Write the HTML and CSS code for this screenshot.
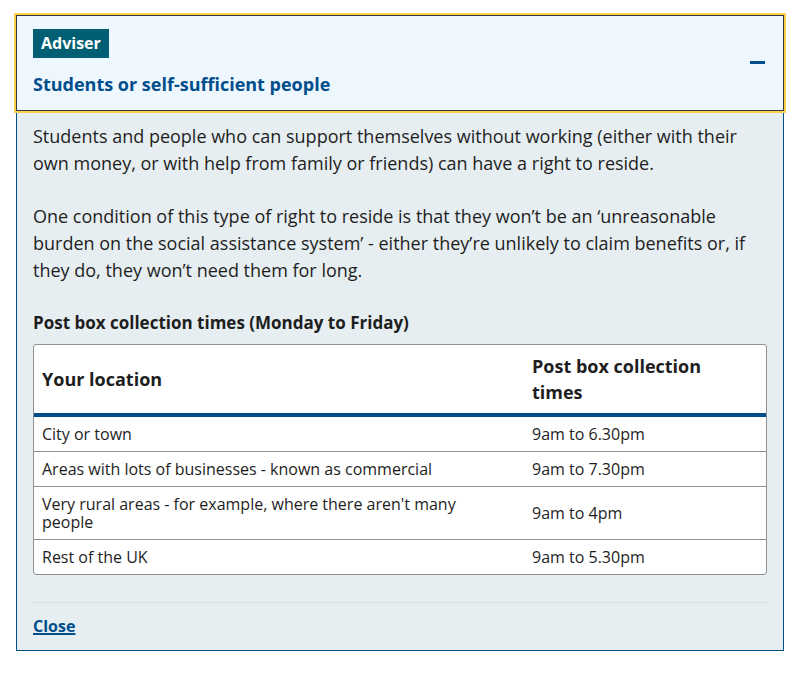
FILE: index.html
```html
<!DOCTYPE html>
<html lang="en">
<head>
<meta charset="utf-8">
<title>Students or self-sufficient people</title>
<link rel="stylesheet" href="styles.css">
</head>
<body>
<div class="panel">
  <div class="panel-header">
    <div class="header-text">
      <span class="badge">Adviser</span>
      <h2 class="title">Students or self-sufficient people</h2>
    </div>
    <span class="minus" aria-hidden="true"></span>
  </div>
  <div class="panel-body">
    <p>Students and people who can support themselves without working (either with their own money, or with help from family or friends) can have a right to reside.</p>
    <p>One condition of this type of right to reside is that they won’t be an ‘unreasonable burden on the social assistance system’ - either they’re unlikely to claim benefits or, if they do, they won’t need them for long.</p>
    <h3 class="caption">Post box collection times (Monday to Friday)</h3>
    <div class="table-wrap">
      <table>
        <thead>
          <tr><th class="col1">Your location</th><th class="col2">Post box collection times</th></tr>
        </thead>
        <tbody>
          <tr><td class="col1">City or town</td><td>9am to 6.30pm</td></tr>
          <tr><td class="col1">Areas with lots of businesses - known as commercial</td><td>9am to 7.30pm</td></tr>
          <tr><td class="col1">Very rural areas - for example, where there aren't many people</td><td>9am to 4pm</td></tr>
          <tr><td class="col1">Rest of the UK</td><td>9am to 5.30pm</td></tr>
        </tbody>
      </table>
    </div>
    <div class="footer">
      <a href="#" class="close">Close</a>
    </div>
  </div>
</div>
</body>
</html>
```

FILE: styles.css
```css
* { box-sizing: border-box; }
html, body { margin: 0; padding: 0; background: #ffffff; }
body {
  padding: 15px 16px;
  font-family: "Open Sans", "Noto Sans", sans-serif;
  color: #1e1e1e;
}
.panel {
  border: 1px solid #00508c;
  background: #e6eef1;
}
.panel-header {
  margin: -1px -1px 0 -1px;
  border: 1px solid #333a40;
  outline: 2px solid #fdcf4a;
  background: #eff7fe;
  padding: 13px 17px 12px 16px;
  display: flex;
  align-items: center;
  justify-content: space-between;
}
.header-text { display: flex; flex-direction: column; align-items: flex-start; }
.badge {
  display: inline-block;
  background: #005f73;
  color: #ffffff;
  font-weight: 700;
  font-size: 16px;
  line-height: 29px;
  padding: 0 8px;
}
.title {
  margin: 13px 0 0 0;
  font-size: 18px;
  line-height: 27px;
  font-weight: 700;
  color: #004e8c;
}
.minus {
  display: block;
  width: 15px;
  height: 3px;
  background: #004e8c;
  margin-right: 1px;
  margin-top: -2px;
}
.panel-body {
  padding: 12px 16px 13px 16px;
}
.panel-body p {
  margin: 0 0 26px 0;
  font-size: 18px;
  line-height: 27px;
}
.caption {
  margin: 4px 0 8px 0;
  font-size: 17px;
  line-height: 26px;
  font-weight: 700;
}
.table-wrap {
  background: #ffffff;
  border: 1px solid #8e9296;
  border-radius: 3px;
  overflow: hidden;
}
table {
  width: 100%;
  border-collapse: collapse;
}
th {
  text-align: left;
  font-size: 18px;
  line-height: 26px;
  font-weight: 700;
  padding: 8px 8px;
  border-bottom: 4px solid #004e8c;
  vertical-align: middle;
}
.col1 { width: 490px; }
th.col2 { padding-right: 40px; }
td {
  font-size: 16px;
  line-height: 18px;
  padding: 8px 8px;
  border-top: 1px solid #8e9296;
  vertical-align: middle;
}
td.col1 { padding-right: 30px; }
thead + tbody tr:first-child td { border-top: 0; }
.footer {
  margin-top: 27px;
  border-top: 1px solid #d7dfe3;
  padding-top: 12px;
}
.close {
  font-size: 16px;
  line-height: 22px;
  font-weight: 700;
  color: #004e8c;
  text-decoration: underline;
  text-decoration-thickness: 2px;
}
```
